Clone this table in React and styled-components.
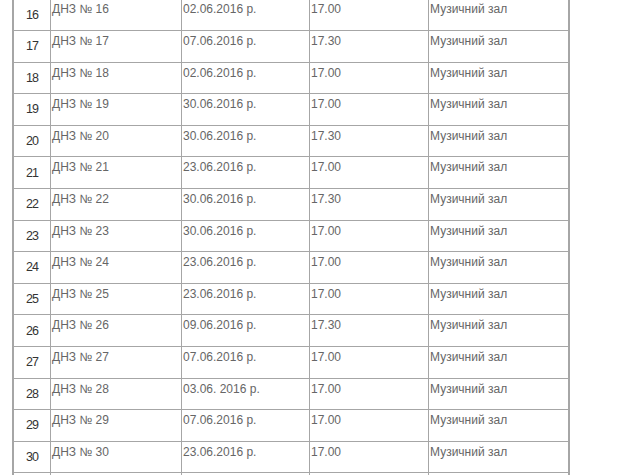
import React from "react";
import styled, { createGlobalStyle } from "styled-components";

const Global = createGlobalStyle`
  body {
    margin: 0;
    background: #ffffff;
    font-family: "Liberation Sans", Arial, sans-serif;
    overflow: hidden;
  }
`;

const Table = styled.div`
  margin: -0.6px 0 0 12px;
  width: 558px;
  border-left: 2px solid #a6a6a6;
  border-right: 2px solid #a6a6a6;
  box-sizing: border-box;
`;

const Row = styled.div`
  display: grid;
  grid-template-columns: 37px 131px 128px 119px 1fr;
  height: 31.6px;
  border-bottom: 1px solid #a6a6a6;
  box-sizing: border-box;
`;

const Cell = styled.div`
  border-right: 1px solid #a6a6a6;
  padding: 3px 0 0 1px;
  font-size: 12px;
  line-height: 15px;
  color: #666666;
  white-space: nowrap;
  overflow: hidden;

  &:last-child {
    border-right: none;
  }
`;

const Num = styled(Cell)`
  display: flex;
  align-items: center;
  justify-content: center;
  padding: 1px 0 0 0;
  color: #333333;
  font-size: 12.5px;
  letter-spacing: -1px;
`;

const rows = [
  [16, "02.06.2016 р.", "17.00"],
  [17, "07.06.2016 р.", "17.30"],
  [18, "02.06.2016 р.", "17.00"],
  [19, "30.06.2016 р.", "17.00"],
  [20, "30.06.2016 р.", "17.30"],
  [21, "23.06.2016 р.", "17.00"],
  [22, "30.06.2016 р.", "17.30"],
  [23, "30.06.2016 р.", "17.00"],
  [24, "23.06.2016 р.", "17.00"],
  [25, "23.06.2016 р.", "17.00"],
  [26, "09.06.2016 р.", "17.30"],
  [27, "07.06.2016 р.", "17.00"],
  [28, "03.06. 2016 р.", "17.00"],
  [29, "07.06.2016 р.", "17.00"],
  [30, "23.06.2016 р.", "17.00"],
];

export default function App() {
  return (
    <>
      <Global />
      <Table>
        {rows.map(([n, date, time]) => (
          <Row key={n}>
            <Num>{n}</Num>
            <Cell>ДНЗ № {n}</Cell>
            <Cell>{date}</Cell>
            <Cell>{time}</Cell>
            <Cell>Музичний зал</Cell>
          </Row>
        ))}
        <Row>
          <Num />
          <Cell />
          <Cell />
          <Cell />
          <Cell />
        </Row>
      </Table>
    </>
  );
}
